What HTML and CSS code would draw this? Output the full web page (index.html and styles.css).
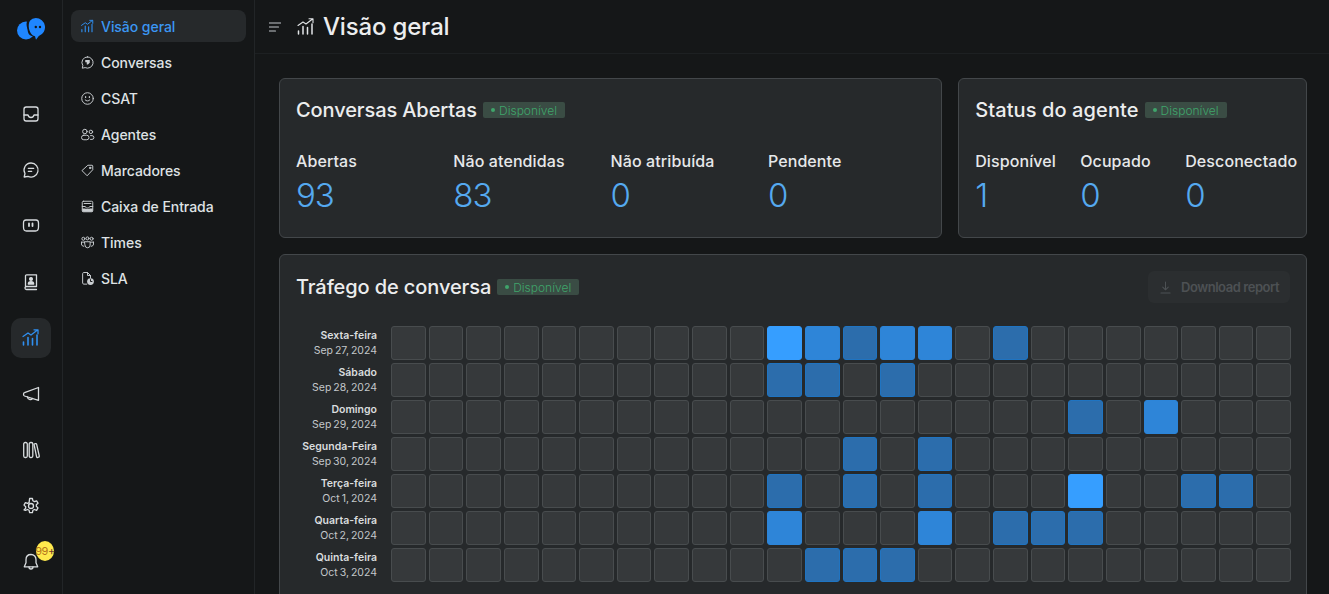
FILE: index.html
```html
<!DOCTYPE html>
<html lang="pt-BR">
<head>
<meta charset="utf-8">
<title>Visão geral</title>
<link rel="stylesheet" href="styles.css">
</head>
<body>
<div class="app">
  <aside class="rail">
    <div class="logo">
      <svg width="28" height="22" viewBox="0 0 28 22"><circle cx="9" cy="12.500" r="9" fill="#1f86ff"/><path d="M18.800 0a9.200 9.200 0 0 1 3 17.900L19 21.800 18 18.300A9.200 9.200 0 0 1 18.800 0Z" fill="#1f86ff"/><path d="M11 2.700c-1.500 5 0 11 6.200 16-3.700-1-6-2-6.500-6-.4-3.500 0-7 .3-10z" fill="#151718"/><path d="M10 3.500c2-2 3-3 5-3.200-3 2-5 8-1 16-3-3-5.500-9-4-12.800z" fill="#151718"/><circle cx="18.800" cy="9" r="1.200" fill="#151718"/><circle cx="23" cy="9" r="1.200" fill="#151718"/></svg>
    </div>
    <nav class="rail-nav">
      <a class="rail-btn"><svg class="ic" viewBox="0 0 20 20"><rect x="3" y="3" width="14" height="14" rx="2.200"/><path d="M3 11h4c.5 2 1.500 2.500 3 2.500s2.500-.5 3-2.500h4"/></svg></a>
      <a class="rail-btn"><svg class="ic" viewBox="0 0 20 20"><path d="M10 3a7 7 0 1 1-3 13.300L3.200 17l.8-3.500A7 7 0 0 1 10 3Z"/><path d="M7.300 8.300h5.400M7.300 11.300h3.400"/></svg></a>
      <a class="rail-btn"><svg class="ic" viewBox="0 0 20 20"><path d="M5 4h10c2 0 2.500 1 2.500 3v4c0 3-1 4-3 4H5.500c-2 0-3-1-3-4V7c0-2 .5-3 2.500-3Z"/><path d="M8 7.500v2.500M11.500 7.500v2.500" stroke-width="1.800"/></svg></a>
      <a class="rail-btn"><svg class="ic" viewBox="0 0 20 20"><path d="M4.500 15V4c0-.7.5-1.200 1.200-1.200h9.800V14.500H5.500a1.500 1.500 0 0 0 0 3h10"/><circle cx="10" cy="7" r="1.400" fill="#d8dcde"/><path d="M7.300 12c0-3 5.400-3 5.400 0z" fill="#d8dcde"/></svg></a>
      <a class="rail-btn active"><svg class="ic blue" viewBox="0 0 20 20"><path d="M2 8.500 7 5l3 2 6.500-5M13 1.800h4v4"/><path d="M2.500 17v-3M7 17V9.500M11.500 17v-6.500M16 17V7" stroke-width="1.600"/></svg></a>
      <a class="rail-btn"><svg class="ic" viewBox="0 0 20 20"><path d="M17.500 3.500v12.800L3.500 12c-1.300-.5-1.300-3 0-3.400z"/><path d="M6.500 13c.2 2.500 3.500 3.500 5 1.500"/></svg></a>
      <a class="rail-btn"><svg class="ic" viewBox="0 0 20 20"><rect x="2.700" y="2.500" width="3.600" height="15" rx="1.500"/><rect x="8.200" y="2.500" width="3.600" height="15" rx="1.500"/><path d="m13 4.200 1.500-.5c.5-.1 1 .1 1.100.5l2.700 12c.1.500-.2.900-.7 1l-1 .3c-.5.100-.9-.1-1-.6z"/></svg></a>
      <a class="rail-btn"><svg class="ic" viewBox="0 0 20 20"><path d="M8.600 2.500h2.800l.5 2.300 1.500.8 2.200-.8 1.400 2.400-1.700 1.600v1.500l1.700 1.600-1.400 2.400-2.200-.8-1.500.8-.5 2.300H8.600l-.5-2.300-1.500-.8-2.200.8L3 13.900l1.700-1.600v-1.600L3 9.100l1.400-2.400 2.200.7 1.500-.8z"/><circle cx="10" cy="10" r="2.500"/></svg></a>
      <a class="rail-btn"><svg class="ic" viewBox="0 0 20 20"><path d="M10 2.500c-3.200 0-5 2.300-5 5.300v3L3.300 14.800h13.400L15 10.800v-3c0-3-1.800-5.300-5-5.300Z"/><path d="M8 15a2 2 0 0 0 4 0"/></svg><span class="count">99<em>+</em></span></a>
    </nav>
  </aside>

  <aside class="side">
    <a class="side-item active"><svg class="sic blue" viewBox="0 0 20 20"><path d="M2 8.500 7 5l3 2 6.500-5M13 1.800h4v4"/><path d="M2.500 17v-3M7 17V9.500M11.500 17v-6.500M16 17V7" stroke-width="1.500"/></svg>Visão geral</a>
    <a class="side-item"><svg class="sic" viewBox="0 0 20 20"><path d="M10 2.500a7.500 7.500 0 1 1-3.200 14.300l-3.800.8.800-3.500A7.500 7.500 0 0 1 10 2.500Z"/><path d="M7 6.800h6v3.500l-2.500 2.500H9V9.500H7z" fill="#c9cdd0" stroke="none"/></svg>Conversas</a>
    <a class="side-item"><svg class="sic" viewBox="0 0 20 20"><circle cx="10" cy="10" r="7.700"/><path d="M6.800 11.800c1.500 2 4.900 2 6.400 0"/><path d="M7.500 7.500v1M12.500 7.500v1" stroke-width="1.600"/></svg>CSAT</a>
    <a class="side-item"><svg class="sic" viewBox="0 0 20 20"><circle cx="6.500" cy="6" r="3"/><circle cx="14.500" cy="6.500" r="2.300"/><rect x="2" y="11" width="10" height="6" rx="3"/><path d="M14 11.500h2a2.500 2.500 0 0 1 0 5h-2"/></svg>Agentes</a>
    <a class="side-item"><svg class="sic" viewBox="0 0 20 20"><path d="M11 3h5c.6 0 1 .4 1 1v5L9.500 17 3 10.500z"/><circle cx="13.500" cy="6.500" r="1" fill="#c9cdd0"/></svg>Marcadores</a>
    <a class="side-item"><svg class="sic" viewBox="0 0 20 20"><rect x="3" y="3" width="14" height="14" rx="1.500"/><path d="M5.500 6h9M3 10h4c.3 1.500 1.500 2 3 2s2.700-.5 3-2h4" stroke-width="1.300"/><path d="M3 12.500h4c.8 1.300 5 1.300 6 0h4V17H3z" fill="#c9cdd0" stroke="none"/></svg>Caixa de Entrada</a>
    <a class="side-item"><svg class="sic" viewBox="0 0 20 20"><circle cx="4.500" cy="5" r="2"/><circle cx="10" cy="4.500" r="2"/><circle cx="15.500" cy="5" r="2"/><path d="M2 9.500h4M14 9.500h4M2 9.500v2.500c0 2 1.500 3 3 3M18 9.500v2.500c0 2-1.500 3-3 3"/><path d="M6.500 9h7v4.500a3.500 3.500 0 0 1-7 0z"/></svg>Times</a>
    <a class="side-item"><svg class="sic" viewBox="0 0 20 20"><path d="M9 17.500H5c-.8 0-1.500-.7-1.500-1.500V3.500C3.500 2.700 4.200 2 5 2h5l4 4v3"/><path d="M10 2v4h4"/><circle cx="14" cy="14" r="4.500" fill="#c9cdd0" stroke="none"/><path d="M14 11.500V14h2" stroke="#151718"/></svg>SLA</a>
  </aside>

  <main class="main">
    <header class="top">
      <svg class="menu" viewBox="0 0 12 10"><path d="M0 1h12M0 5h9.500M0 9h6.500"/></svg>
      <svg class="top-ic" viewBox="0 0 20 20"><path d="M2 8.500 7 5l3 2 6.500-5M13 1.800h4v4"/><path d="M2.500 17v-3M7 17V9.500M11.500 17v-6.500M16 17V7" stroke-width="1.500"/></svg>
      <h1>Visão geral</h1>
    </header>
    <div class="content">
      <div class="cards">
        <section class="card">
          <div class="head"><h2>Conversas Abertas</h2><span class="badge"><b></b>Disponível</span></div>
          <div class="stats four">
            <div><p>Abertas</p><strong>93</strong></div>
            <div><p>Não atendidas</p><strong>83</strong></div>
            <div><p>Não atribuída</p><strong>0</strong></div>
            <div><p>Pendente</p><strong>0</strong></div>
          </div>
        </section>
        <section class="card agents">
          <div class="head"><h2>Status do agente</h2><span class="badge"><b></b>Disponível</span></div>
          <div class="stats three">
            <div><p>Disponível</p><strong>1</strong></div>
            <div><p>Ocupado</p><strong>0</strong></div>
            <div><p>Desconectado</p><strong>0</strong></div>
          </div>
        </section>
      </div>
      <section class="card traffic">
        <div class="traffic-head">
          <div class="head flat"><h2>Tráfego de conversa</h2><span class="badge"><b></b>Disponível</span></div>
          <button class="download"><svg viewBox="0 0 12 14"><path d="M6 1v8M3 6.500 6 9.500l3-3M1 13h10"/></svg>Download report</button>
        </div>
        <div class="heat">
          <div class="days">
            <div class="day"><b>Sexta-feira</b><span>Sep 27, 2024</span></div>
            <div class="day"><b>Sábado</b><span>Sep 28, 2024</span></div>
            <div class="day"><b>Domingo</b><span>Sep 29, 2024</span></div>
            <div class="day"><b>Segunda-Feira</b><span>Sep 30, 2024</span></div>
            <div class="day"><b>Terça-feira</b><span>Oct 1, 2024</span></div>
            <div class="day"><b>Quarta-feira</b><span>Oct 2, 2024</span></div>
            <div class="day"><b>Quinta-feira</b><span>Oct 3, 2024</span></div>
          </div>
          <div class="grid">
            <i></i><i></i><i></i><i></i><i></i><i></i><i></i><i></i><i></i><i></i><i class="l5"></i><i class="l3"></i><i class="l2"></i><i class="l3"></i><i class="l3"></i><i></i><i class="l2"></i><i></i><i></i><i></i><i></i><i></i><i></i><i></i>
            <i></i><i></i><i></i><i></i><i></i><i></i><i></i><i></i><i></i><i></i><i class="l2"></i><i class="l2"></i><i></i><i class="l2"></i><i></i><i></i><i></i><i></i><i></i><i></i><i></i><i></i><i></i><i></i>
            <i></i><i></i><i></i><i></i><i></i><i></i><i></i><i></i><i></i><i></i><i></i><i></i><i></i><i></i><i></i><i></i><i></i><i></i><i class="l2"></i><i></i><i class="l3"></i><i></i><i></i><i></i>
            <i></i><i></i><i></i><i></i><i></i><i></i><i></i><i></i><i></i><i></i><i></i><i></i><i class="l2"></i><i></i><i class="l2"></i><i></i><i></i><i></i><i></i><i></i><i></i><i></i><i></i><i></i>
            <i></i><i></i><i></i><i></i><i></i><i></i><i></i><i></i><i></i><i></i><i class="l2"></i><i></i><i class="l2"></i><i></i><i class="l2"></i><i></i><i></i><i></i><i class="l5"></i><i></i><i></i><i class="l2"></i><i class="l2"></i><i></i>
            <i></i><i></i><i></i><i></i><i></i><i></i><i></i><i></i><i></i><i></i><i class="l3"></i><i></i><i></i><i></i><i class="l3"></i><i></i><i class="l2"></i><i class="l2"></i><i class="l2"></i><i></i><i></i><i></i><i></i><i></i>
            <i></i><i></i><i></i><i></i><i></i><i></i><i></i><i></i><i></i><i></i><i></i><i class="l2"></i><i class="l2"></i><i class="l2"></i><i></i><i></i><i></i><i></i><i></i><i></i><i></i><i></i><i></i><i></i>
          </div>
        </div>
      </section>
    </div>
  </main>
</div>
</body>
</html>
```

FILE: styles.css
```css
* { box-sizing: border-box; }
html, body { margin: 0; height: 100%; overflow: hidden; }
body { background: #151718; color: #ecedee; font-family: "Inter", "Noto Sans", sans-serif; }
svg { fill: none; stroke-linecap: round; stroke-linejoin: round; display: block; flex: none; }

.app { display: flex; height: 594px; overflow: hidden; }

.rail { width: 63px; flex: none; border-right: 1px solid #222527; display: flex; flex-direction: column; align-items: center; }
.logo { height: 58px; margin-bottom: 36px; display: flex; align-items: center; justify-content: center; }
.rail-nav { display: flex; flex-direction: column; gap: 16px; }
.rail-btn { position: relative; width: 40px; height: 40px; border-radius: 10px; display: flex; align-items: center; justify-content: center; }
.rail-btn.active { background: #26292b; }
.ic { width: 20px; height: 20px; stroke: #d8dcde; stroke-width: 1.300; }
.ic.blue, .sic.blue { stroke: #2f8ff0; }
.count { position: absolute; left: 25px; top: -1px; width: 18px; height: 20px; border-radius: 50%; background: #ffe94d; color: #b5761b; font-size: 11px; line-height: 20px; display: flex; justify-content: center; white-space: nowrap; letter-spacing: -.4px; }
.count em { font-style: normal; color: #6e3a2e; }

.side { width: 192px; flex: none; border-right: 1px solid #222527; padding: 10px 8px; display: flex; flex-direction: column; gap: 4px; }
.side-item { width: 175px; height: 32px; flex: none; display: flex; align-items: center; gap: 6px; padding: 0 9px; border-radius: 8px; font-size: 14px; font-weight: 500; color: #dfe2e4; white-space: nowrap; letter-spacing: -.05px; }
.side-item.active { background: #26292b; color: #3b97f3; }
.sic { width: 15px; height: 15px; stroke: #c9cdd0; stroke-width: 1.300; }

.main { flex: 1; min-width: 0; }
.top { height: 54px; border-bottom: 1px solid #1d2022; display: flex; align-items: center; padding-left: 14px; }
.menu { width: 12px; height: 10px; stroke: #c2c6c9; stroke-width: 1.100; margin-right: 15px; }
.top-ic { width: 20px; height: 20px; stroke: #e2e5e7; stroke-width: 1.100; margin-right: 7px; }
h1 { margin: 0; font-size: 24px; font-weight: 500; color: #ecedee; letter-spacing: -.17px; }

.content { padding: 24px 22px 0 24px; }
.cards { display: grid; grid-template-columns: 1fr 349px; gap: 16px; margin-bottom: 16px; }
.card { background: #26292b; border: 1px solid #43474a; border-radius: 6px; padding: 16px; }
.cards .card { height: 160px; }
.head { display: flex; align-items: center; gap: 6px; height: 30px; }
h2 { margin: 0; font-size: 20px; font-weight: 500; color: #ecedee; letter-spacing: -.1px; white-space: nowrap; }
.agents h2 { letter-spacing: .1px; }
.badge { height: 16px; display: flex; align-items: center; gap: 4px; padding: 0 8px; background: #3a4c44; color: #3fa56b; font-size: 12px; font-weight: 300; border-radius: 2px; }
.badge b { width: 4px; height: 4px; border-radius: 50%; background: #3fa56b; }
.stats { display: grid; margin-top: 25px; }
.four { grid-template-columns: repeat(4, 157.300px); }
.three { grid-template-columns: repeat(3, 105px); }
.stats p { margin: 0; font-size: 16px; font-weight: 500; line-height: 22px; color: #e6e8ea; white-space: nowrap; letter-spacing: .1px; }
.stats strong { display: block; font-size: 33px; font-weight: 300; line-height: 44px; color: #55a9f0; margin-top: 1px; letter-spacing: -1px; }

.traffic { height: 420px; padding-right: 15px; }
.traffic-head { display: flex; align-items: center; justify-content: space-between; margin-bottom: 23px; padding-right: 1px; }
.flat { margin: 0; }
.download { height: 32px; width: 142px; border: 0; border-radius: 6px; background: #2b2e30; color: #4d5154; font: 600 13px "Inter", sans-serif; display: flex; align-items: center; gap: 10px; padding: 0 0 0 12px; white-space: nowrap; letter-spacing: -.45px; }
.download svg { width: 11px; height: 13px; stroke: #4d5154; stroke-width: 1.100; }
.heat { display: flex; gap: 14px; }
.days { width: 81px; flex: none; display: flex; flex-direction: column; gap: 3px; }
.day { height: 34px; display: flex; flex-direction: column; align-items: flex-end; justify-content: center; font-size: 10.500px; line-height: 15px; white-space: nowrap; }
.day b { font-weight: 600; color: #d9dcde; }
.day span { color: #c3c7ca; word-spacing: -1px; }
.grid { flex: 1; display: grid; grid-template-columns: repeat(24, 1fr); grid-auto-rows: 34px; gap: 3px; }
.grid i { display: block; background: #36393b; border: 1px solid #484c4e; border-radius: 3px; }
.grid i.l2 { background: #2c6dac; border-color: #1f74c2; }
.grid i.l3 { background: #2e85d8; border-color: #2c85d9; }
.grid i.l5 { background: #369eff; border-color: #369eff; }
```
